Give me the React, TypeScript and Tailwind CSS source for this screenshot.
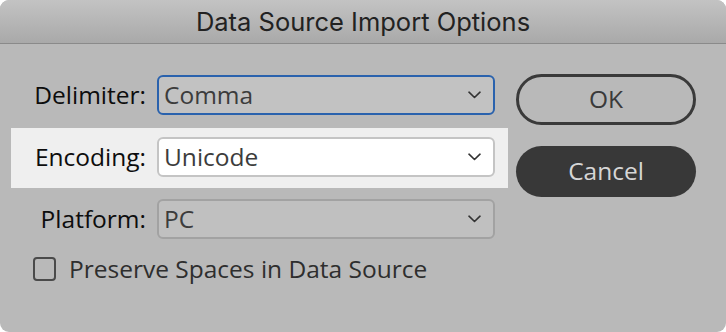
import React from 'react';

const Chevron = () => (
  <svg width="13" height="8" viewBox="0 0 13 8" fill="none" className="shrink-0">
    <path d="M1 1.2 L6.5 6.5 L12 1.2" stroke="#333" strokeWidth="1.6" strokeLinecap="round" strokeLinejoin="round" />
  </svg>
);

type SelectProps = { value: string; variant: 'focused' | 'plain' | 'white' };

const SelectBox = ({ value, variant }: SelectProps) => {
  const styles = {
    focused: 'bg-[#c2c2c2] border-2 border-[#2a62ad]',
    plain: 'bg-[#c0c0c0] border-2 border-[#a2a2a2]',
    white: 'bg-white border-2 border-[#c4c4c4]',
  }[variant];
  return (
    <div className={`w-[338px] h-[40px] rounded-[6px] flex items-center justify-between pl-[5px] pr-[12px] ${styles}`}>
      <span className="text-[24.5px] text-[#3c3c3c] leading-none">{value}</span>
      <Chevron />
    </div>
  );
};

const Row = ({ label, value, variant, highlight }: { label: string; value: string; variant: SelectProps['variant']; highlight?: boolean }) => (
  <div className={`h-[60px] flex items-center pb-[2px] ${highlight ? 'bg-[#efefef]' : ''}`}>
    <span className="w-[135px] text-right text-[24.5px] text-[#0d0d0d] leading-none">{label}</span>
    <div className="ml-[11px]">
      <SelectBox value={value} variant={variant} />
    </div>
    <div className="w-[13px]" />
  </div>
);

export default function App() {
  return (
    <div className="w-[726px] h-[332px] bg-white" style={{ fontFamily: '"Open Sans", "Noto Sans", sans-serif' }}>
      <div className="w-full h-full rounded-[9px] overflow-hidden bg-[#b9b9b9] flex flex-col">
        <div className="h-[44px] shrink-0 flex items-center justify-center bg-gradient-to-b from-[#c3c3c3] to-[#a9a9a9] border-b border-[#8a8a8a]">
          <span className="text-[25.5px] text-[#222] leading-none" style={{ fontFamily: 'Inter, "Liberation Sans", sans-serif' }}>
            Data Source Import Options
          </span>
        </div>
        <div className="flex pl-[11px] pt-[22px]">
          <div className="w-[497px] flex flex-col gap-[2px]">
            <Row label="Delimiter:" value="Comma" variant="focused" />
            <Row label="Encoding:" value="Unicode" variant="white" highlight />
            <Row label="Platform:" value="PC" variant="plain" />
            <div className="flex items-center mt-[5px] pl-[22px] gap-[13px]">
              <div className="w-[23px] h-[24px] rounded-[4px] border-2 border-[#4a4a4a]" />
              <span className="text-[24.5px] text-[#2e2e2e] leading-none">Preserve Spaces in Data Source</span>
            </div>
          </div>
          <div className="ml-[8px] mt-[8px] flex flex-col gap-[21px]">
            <button className="w-[180px] h-[51px] rounded-full border-[3px] border-[#3a3a3a] text-[24.5px] text-[#3a3a3a] leading-none">
              OK
            </button>
            <button className="w-[180px] h-[51px] rounded-full bg-[#383838] text-[24.5px] text-[#d6d6d6] leading-none">
              Cancel
            </button>
          </div>
        </div>
      </div>
    </div>
  );
}
